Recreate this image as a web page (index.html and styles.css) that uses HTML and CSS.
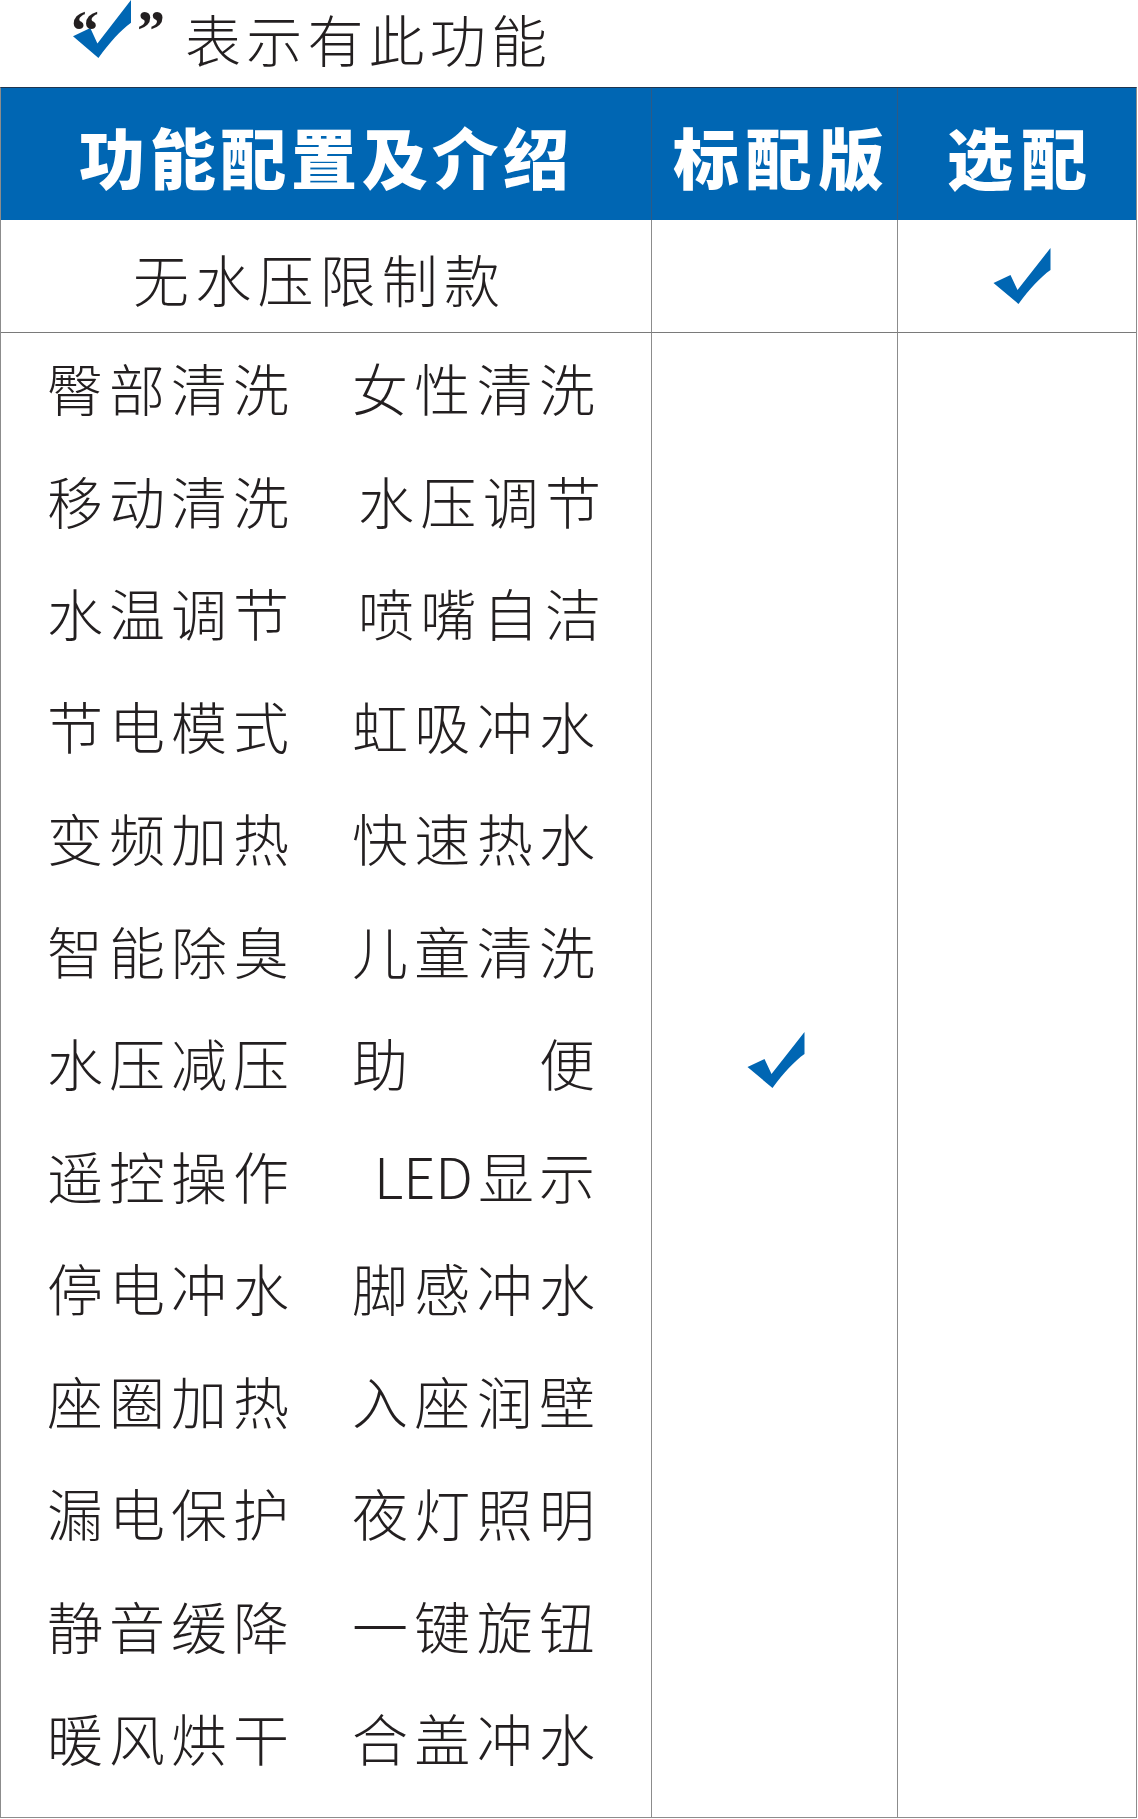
FILE: index.html
```html
<!DOCTYPE html>
<html lang="zh-CN">
<head>
<meta charset="utf-8">
<title>功能配置及介绍</title>
<link rel="stylesheet" href="styles.css">
</head>
<body>
<div class="legend">
  <div class="mark">
    <span class="q q-open">“</span>
    <svg class="chk chk-legend" viewBox="0 0 57 56" preserveAspectRatio="none"><path d="M0 35 L17 27 L24 42 L57 0 L57 22 C47 29 36 41 25 56 Z"/></svg>
    <span class="q q-close">”</span>
  </div>
  <span class="legend-text">表示有此功能</span>
</div>

<div class="table">
  <div class="th th1"><span class="hl hl1">功能配置及介绍</span></div>
  <div class="th th2"><span class="hl hl2">标配版</span></div>
  <div class="th th3"><span class="hl hl3">选配</span></div>

  <div class="r1 c1"><span class="r1-text">无水压限制款</span></div>
  <div class="r1 c2"></div>
  <div class="r1 c3"><svg class="chk chk-opt" viewBox="0 0 57 56"><path d="M0 35 L17 27 L24 42 L57 0 L57 22 C47 29 36 41 25 56 Z"/></svg></div>

  <div class="body c1">
    <div class="frow"><span class="fa">臀部清洗</span><span class="fb">女性清洗</span></div>
    <div class="frow"><span class="fa">移动清洗</span><span class="fb shift">水压调节</span></div>
    <div class="frow"><span class="fa">水温调节</span><span class="fb shift">喷嘴自洁</span></div>
    <div class="frow"><span class="fa">节电模式</span><span class="fb">虹吸冲水</span></div>
    <div class="frow"><span class="fa">变频加热</span><span class="fb">快速热水</span></div>
    <div class="frow"><span class="fa">智能除臭</span><span class="fb">儿童清洗</span></div>
    <div class="frow"><span class="fa">水压减压</span><span class="fb">助 便</span></div>
    <div class="frow"><span class="fa">遥控操作</span><span class="fb led">LED显示</span></div>
    <div class="frow"><span class="fa">停电冲水</span><span class="fb">脚感冲水</span></div>
    <div class="frow"><span class="fa">座圈加热</span><span class="fb">入座润壁</span></div>
    <div class="frow"><span class="fa">漏电保护</span><span class="fb">夜灯照明</span></div>
    <div class="frow"><span class="fa">静音缓降</span><span class="fb">一键旋钮</span></div>
    <div class="frow"><span class="fa">暖风烘干</span><span class="fb">合盖冲水</span></div>
  </div>
  <div class="body c2 std"><svg class="chk chk-std" viewBox="0 0 57 56"><path d="M0 35 L17 27 L24 42 L57 0 L57 22 C47 29 36 41 25 56 Z"/></svg></div>
  <div class="body c3"></div>
</div>
</body>
</html>
```

FILE: styles.css
```css
html, body {
  margin: 0;
  padding: 0;
  background: #ffffff;
}
body {
  width: 1138px;
  font-family: "Noto Sans CJK SC", "Noto Sans", sans-serif;
  color: #231f20;
}

.legend {
  height: 87px;
  display: flex;
  align-items: flex-start;
  box-sizing: border-box;
}
.mark {
  position: relative;
  display: flex;
  align-items: flex-start;
  margin-left: 73px;
  height: 60px;
}
.chk {
  fill: #0066b3;
  display: block;
}
.chk-legend {
  width: 58px;
  height: 58px;
}
.q {
  font-family: "Liberation Serif", serif;
  font-weight: 700;
  font-size: 56px;
  line-height: 66px;
  height: 60px;
  overflow: visible;
  color: #231f20;
}
.q-open {
  position: absolute;
  left: -2px;
  top: -2px;
}
.q-close {
  margin-left: 6px;
  margin-top: -2px;
}
.legend-text {
  margin-left: 20px;
  margin-top: 5px;
  width: 362px;
  font-size: 56px;
  font-weight: 300;
  line-height: 66px;
  text-align: justify;
  text-align-last: justify;
}

.table {
  width: 1137px;
  box-sizing: border-box;
  border: 1px solid #8c8c8c;
  border-top: 1px solid #1f3550;
  display: grid;
  grid-template-columns: 650px 246px 239px;
  grid-template-rows: 132px 113px 1484px;
}
.c2, .c3, .th2, .th3 {
  border-left: 1px solid #8c8c8c;
}
.th {
  background: #0066b3;
  color: #ffffff;
  display: flex;
  align-items: center;
  box-sizing: border-box;
  padding-top: 4px;
}
.th2, .th3 {
  border-left-color: #2d5a86;
}
.hl {
  font-size: 66px;
  font-weight: 900;
  line-height: 1.2;
  text-align: justify;
  text-align-last: justify;
}
.hl1 {
  margin-left: 78px;
  width: 490px;
}
.hl2 {
  margin-left: 21px;
  width: 211px;
}
.hl3 {
  margin-left: 49px;
  width: 140px;
}

.r1 {
  box-sizing: border-box;
  border-bottom: 1px solid #7a7a7a;
  display: flex;
  align-items: center;
}
.r1-text {
  margin-left: 132px;
  width: 367px;
  padding-top: 4px;
  font-size: 56px;
  font-weight: 300;
  line-height: 1.2;
  text-align: justify;
  text-align-last: justify;
}
.c3.r1 {
  justify-content: center;
  padding-left: 10px;
}
.chk-opt {
  width: 58px;
  height: 56px;
}

.body.c1 {
  display: flex;
  flex-direction: column;
  padding-top: 0;
}
.frow {
  height: 112.5px;
  flex: none;
  display: flex;
  align-items: center;
  padding-left: 46px;
  padding-bottom: 5px;
  box-sizing: border-box;
  font-size: 56px;
  font-weight: 300;
  line-height: 1.2;
}
.fa, .fb {
  display: block;
  text-align: justify;
  text-align-last: justify;
  white-space: nowrap;
}
.fa {
  width: 242px;
}
.fb {
  margin-left: 63px;
  width: 243px;
}
.fb.shift {
  margin-left: 69px;
}
.fb.led {
  margin-left: 85px;
  width: 221px;
}

.std {
  display: flex;
  align-items: center;
  justify-content: center;
  padding-bottom: 30px;
  padding-left: 2px;
  box-sizing: border-box;
}
.chk-std {
  width: 58px;
  height: 56px;
}
```
